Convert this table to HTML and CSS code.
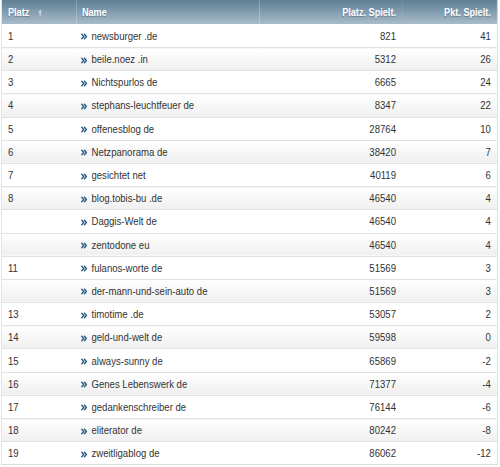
FILE: index.html
```html
<!DOCTYPE html>
<html>
<head>
<meta charset="utf-8">
<link rel="stylesheet" href="styles.css">
</head>
<body>
<div class="wrap">
<table class="rank">
<thead>
<tr><th class="c-platz">Platz <svg class="sort" viewBox="0 0 6 8"><path d="M3 0.5 L5.5 3.5 L3.9 3.5 L3.9 7.5 L2.1 7.5 L2.1 3.5 L0.5 3.5 Z" fill="#c3cfd8"/></svg></th><th class="c-name">Name</th><th class="c-num">Platz. Spielt.</th><th class="c-pkt">Pkt. Spielt.</th></tr>
</thead>
<tbody>
<tr><td class="c-platz">1</td><td class="c-name"><svg class="ico" viewBox="0 0 8 8"><path d="M0.5 1 L3.5 4 L0.5 7 M4 1 L7 4 L4 7" fill="none" stroke="#2b5d86" stroke-width="1.8"/></svg>newsburger .de</td><td class="c-num">821</td><td class="c-pkt">41</td></tr>
<tr><td class="c-platz">2</td><td class="c-name"><svg class="ico" viewBox="0 0 8 8"><path d="M0.5 1 L3.5 4 L0.5 7 M4 1 L7 4 L4 7" fill="none" stroke="#2b5d86" stroke-width="1.8"/></svg>beile.noez .in</td><td class="c-num">5312</td><td class="c-pkt">26</td></tr>
<tr><td class="c-platz">3</td><td class="c-name"><svg class="ico" viewBox="0 0 8 8"><path d="M0.5 1 L3.5 4 L0.5 7 M4 1 L7 4 L4 7" fill="none" stroke="#2b5d86" stroke-width="1.8"/></svg>Nichtspurlos de</td><td class="c-num">6665</td><td class="c-pkt">24</td></tr>
<tr><td class="c-platz">4</td><td class="c-name"><svg class="ico" viewBox="0 0 8 8"><path d="M0.5 1 L3.5 4 L0.5 7 M4 1 L7 4 L4 7" fill="none" stroke="#2b5d86" stroke-width="1.8"/></svg>stephans-leuchtfeuer de</td><td class="c-num">8347</td><td class="c-pkt">22</td></tr>
<tr><td class="c-platz">5</td><td class="c-name"><svg class="ico" viewBox="0 0 8 8"><path d="M0.5 1 L3.5 4 L0.5 7 M4 1 L7 4 L4 7" fill="none" stroke="#2b5d86" stroke-width="1.8"/></svg>offenesblog de</td><td class="c-num">28764</td><td class="c-pkt">10</td></tr>
<tr><td class="c-platz">6</td><td class="c-name"><svg class="ico" viewBox="0 0 8 8"><path d="M0.5 1 L3.5 4 L0.5 7 M4 1 L7 4 L4 7" fill="none" stroke="#2b5d86" stroke-width="1.8"/></svg>Netzpanorama de</td><td class="c-num">38420</td><td class="c-pkt">7</td></tr>
<tr><td class="c-platz">7</td><td class="c-name"><svg class="ico" viewBox="0 0 8 8"><path d="M0.5 1 L3.5 4 L0.5 7 M4 1 L7 4 L4 7" fill="none" stroke="#2b5d86" stroke-width="1.8"/></svg>gesichtet net</td><td class="c-num">40119</td><td class="c-pkt">6</td></tr>
<tr><td class="c-platz">8</td><td class="c-name"><svg class="ico" viewBox="0 0 8 8"><path d="M0.5 1 L3.5 4 L0.5 7 M4 1 L7 4 L4 7" fill="none" stroke="#2b5d86" stroke-width="1.8"/></svg>blog.tobis-bu .de</td><td class="c-num">46540</td><td class="c-pkt">4</td></tr>
<tr><td class="c-platz"></td><td class="c-name"><svg class="ico" viewBox="0 0 8 8"><path d="M0.5 1 L3.5 4 L0.5 7 M4 1 L7 4 L4 7" fill="none" stroke="#2b5d86" stroke-width="1.8"/></svg>Daggis-Welt de</td><td class="c-num">46540</td><td class="c-pkt">4</td></tr>
<tr><td class="c-platz"></td><td class="c-name"><svg class="ico" viewBox="0 0 8 8"><path d="M0.5 1 L3.5 4 L0.5 7 M4 1 L7 4 L4 7" fill="none" stroke="#2b5d86" stroke-width="1.8"/></svg>zentodone eu</td><td class="c-num">46540</td><td class="c-pkt">4</td></tr>
<tr><td class="c-platz">11</td><td class="c-name"><svg class="ico" viewBox="0 0 8 8"><path d="M0.5 1 L3.5 4 L0.5 7 M4 1 L7 4 L4 7" fill="none" stroke="#2b5d86" stroke-width="1.8"/></svg>fulanos-worte de</td><td class="c-num">51569</td><td class="c-pkt">3</td></tr>
<tr><td class="c-platz"></td><td class="c-name"><svg class="ico" viewBox="0 0 8 8"><path d="M0.5 1 L3.5 4 L0.5 7 M4 1 L7 4 L4 7" fill="none" stroke="#2b5d86" stroke-width="1.8"/></svg>der-mann-und-sein-auto de</td><td class="c-num">51569</td><td class="c-pkt">3</td></tr>
<tr><td class="c-platz">13</td><td class="c-name"><svg class="ico" viewBox="0 0 8 8"><path d="M0.5 1 L3.5 4 L0.5 7 M4 1 L7 4 L4 7" fill="none" stroke="#2b5d86" stroke-width="1.8"/></svg>timotime .de</td><td class="c-num">53057</td><td class="c-pkt">2</td></tr>
<tr><td class="c-platz">14</td><td class="c-name"><svg class="ico" viewBox="0 0 8 8"><path d="M0.5 1 L3.5 4 L0.5 7 M4 1 L7 4 L4 7" fill="none" stroke="#2b5d86" stroke-width="1.8"/></svg>geld-und-welt de</td><td class="c-num">59598</td><td class="c-pkt">0</td></tr>
<tr><td class="c-platz">15</td><td class="c-name"><svg class="ico" viewBox="0 0 8 8"><path d="M0.5 1 L3.5 4 L0.5 7 M4 1 L7 4 L4 7" fill="none" stroke="#2b5d86" stroke-width="1.8"/></svg>always-sunny de</td><td class="c-num">65869</td><td class="c-pkt">-2</td></tr>
<tr><td class="c-platz">16</td><td class="c-name"><svg class="ico" viewBox="0 0 8 8"><path d="M0.5 1 L3.5 4 L0.5 7 M4 1 L7 4 L4 7" fill="none" stroke="#2b5d86" stroke-width="1.8"/></svg>Genes Lebenswerk de</td><td class="c-num">71377</td><td class="c-pkt">-4</td></tr>
<tr><td class="c-platz">17</td><td class="c-name"><svg class="ico" viewBox="0 0 8 8"><path d="M0.5 1 L3.5 4 L0.5 7 M4 1 L7 4 L4 7" fill="none" stroke="#2b5d86" stroke-width="1.8"/></svg>gedankenschreiber de</td><td class="c-num">76144</td><td class="c-pkt">-6</td></tr>
<tr><td class="c-platz">18</td><td class="c-name"><svg class="ico" viewBox="0 0 8 8"><path d="M0.5 1 L3.5 4 L0.5 7 M4 1 L7 4 L4 7" fill="none" stroke="#2b5d86" stroke-width="1.8"/></svg>eliterator de</td><td class="c-num">80242</td><td class="c-pkt">-8</td></tr>
<tr><td class="c-platz">19</td><td class="c-name"><svg class="ico" viewBox="0 0 8 8"><path d="M0.5 1 L3.5 4 L0.5 7 M4 1 L7 4 L4 7" fill="none" stroke="#2b5d86" stroke-width="1.8"/></svg>zweitligablog de</td><td class="c-num">86062</td><td class="c-pkt">-12</td></tr>
</tbody>
</table>
</div>
</body>
</html>
```
FILE: styles.css
```css
html, body {
  margin: 0;
  padding: 0;
  background: #fff;
}
body {
  padding: 0 0 0 1px;
}
.wrap {
  width: 497px;
  overflow: hidden;
}
/* the reference is horizontally compressed; render at natural width, then condense */
.rank {
  width: 571px;
  table-layout: fixed;
  border-collapse: collapse;
  font-family: "Liberation Sans", Arial, sans-serif;
  font-size: 11px;
  color: #333;
  border-left: 1px solid #e0e0e0;
  border-right: 1px solid #e0e0e0;
  border-bottom: 1px solid #dcdcdc;
  transform: scaleX(0.87);
  transform-origin: 0 0;
}
.rank th {
  height: 24px;
  padding: 0 7px;
  background: linear-gradient(#5e7e95, #a8bccb);
  color: #fff;
  font-size: 10.5px;
  font-weight: bold;
  text-shadow: 0 1px 1px rgba(40, 60, 80, 0.4);
  text-align: left;
  vertical-align: middle;
  white-space: nowrap;
}
.rank td {
  height: 22.2px;
  padding: 0 7px;
  border-top: 1px solid #e2e2e2;
  vertical-align: middle;
  white-space: nowrap;
}
.rank tbody tr:first-child td {
  border-top: none;
  height: 23px;
}
.rank tbody tr:nth-child(even) td {
  background: linear-gradient(#ffffff, #efefef);
}
.rank .c-platz { width: 74px; padding-left: 7px; padding-right: 5px; }
.rank .c-name { width: auto; padding-left: 5px; }
.rank th.c-name { padding-left: 6px; }
.rank .c-num { text-align: right; width: 150px; padding-right: 7px; }
.rank .c-pkt { text-align: right; width: 95px; padding-right: 7px; }
.sort {
  width: 6px;
  height: 8px;
  margin-left: 7px;
  vertical-align: -0.5px;
}
.ico {
  width: 7px;
  height: 7px;
  margin-right: 5px;
  vertical-align: -0.5px;
}
```
